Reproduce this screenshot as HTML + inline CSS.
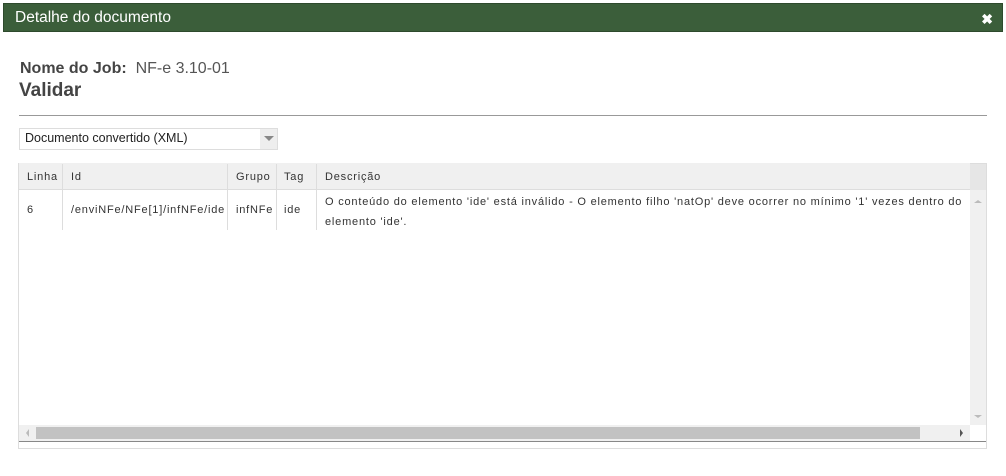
<!DOCTYPE html>
<html><head><style>
body{margin:0;width:1006px;height:476px;background:#fff;font-family:"Liberation Sans",sans-serif;position:relative;overflow:hidden}
.a{position:absolute}
.bar{left:3px;top:3px;width:1000px;height:29px;background:#3b5e3a;border:1px solid #2e4a2d;box-sizing:border-box}
.bar span{position:absolute;left:11px;top:5px;color:#fff;font-size:15.5px}
.x{right:9px;top:7px;color:#fff;font-size:14px;font-weight:bold}
.t{font-size:11px;color:#333;letter-spacing:.8px}
.th{top:163px;height:27px;background:#f0f0f0;border-bottom:1px solid #ddd;box-sizing:border-box}
.col{border-right:1px solid #ddd;box-sizing:border-box}
</style></head><body>
<div class="a bar"><span>Detalhe do documento</span><div class="a x">✖</div></div>
<div class="a" style="left:20px;top:60px;font-size:16px;color:#444"><b>Nome do Job:</b>&nbsp; <span style="color:#555">NF-e 3.10-01</span></div>
<div class="a" style="left:19px;top:80px;font-size:19px;font-weight:bold;color:#444">Validar</div>
<div class="a" style="left:19px;top:115px;width:968px;height:1px;background:#999"></div>
<div class="a" style="left:19px;top:128px;width:259px;height:22px;border:1px solid #ddd;box-sizing:border-box"></div>
<div class="a" style="left:25px;top:131px;font-size:12.5px;color:#222">Documento convertido (XML)</div>
<div class="a" style="left:260px;top:129px;width:17px;height:20px;background:#eee"></div>
<div class="a" style="left:264px;top:136px;width:0;height:0;border-left:5px solid transparent;border-right:5px solid transparent;border-top:5px solid #888"></div>
<div class="a" style="left:18px;top:163px;width:969px;height:286px;border:1px solid #ddd;box-sizing:border-box"></div>
<div class="a th" style="left:19px;width:951px"></div>
<div class="a" style="left:970px;top:164px;width:16px;height:26px;background:#e6e6e6"></div>
<div class="a col" style="left:19px;top:164px;width:44px;height:66px"></div>
<div class="a col" style="left:63px;top:164px;width:165px;height:66px"></div>
<div class="a col" style="left:228px;top:164px;width:49px;height:66px"></div>
<div class="a col" style="left:277px;top:164px;width:40px;height:66px"></div>
<div class="a t" style="left:27px;top:171px">Linha</div>
<div class="a t" style="left:71px;top:171px">Id</div>
<div class="a t" style="left:236px;top:171px">Grupo</div>
<div class="a t" style="left:284px;top:171px">Tag</div>
<div class="a t" style="left:325px;top:171px">Descrição</div>
<div class="a t" style="left:27px;top:204px">6</div>
<div class="a t" style="left:71px;top:204px">/enviNFe/NFe[1]/infNFe/ide</div>
<div class="a t" style="left:236px;top:204px">infNFe</div>
<div class="a t" style="left:284px;top:204px">ide</div>
<div class="a t" style="left:325px;top:192px;width:640px;line-height:20px">O conteúdo do elemento 'ide' está inválido - O elemento filho 'natOp' deve ocorrer no mínimo '1' vezes dentro do<br>elemento 'ide'.</div>
<div class="a" style="left:970px;top:190px;width:16px;height:235px;background:#f0f0f0"></div>
<div class="a" style="left:974px;top:200px;border-left:4px solid transparent;border-right:4px solid transparent;border-bottom:3px solid #bbb"></div>
<div class="a" style="left:974px;top:415px;border-left:4px solid transparent;border-right:4px solid transparent;border-top:3px solid #bbb"></div>
<div class="a" style="left:19px;top:425px;width:951px;height:16px;background:#f0f0f0"></div>
<div class="a" style="left:36px;top:427px;width:884px;height:12px;background:#c2c2c2"></div>
<div class="a" style="left:26px;top:429px;border-top:4px solid transparent;border-bottom:4px solid transparent;border-right:3px solid #bbb"></div>
<div class="a" style="left:960px;top:429px;border-top:4px solid transparent;border-bottom:4px solid transparent;border-left:3px solid #555"></div>
<div class="a" style="left:19px;top:441px;width:967px;height:1px;background:#888"></div>
</body></html>
